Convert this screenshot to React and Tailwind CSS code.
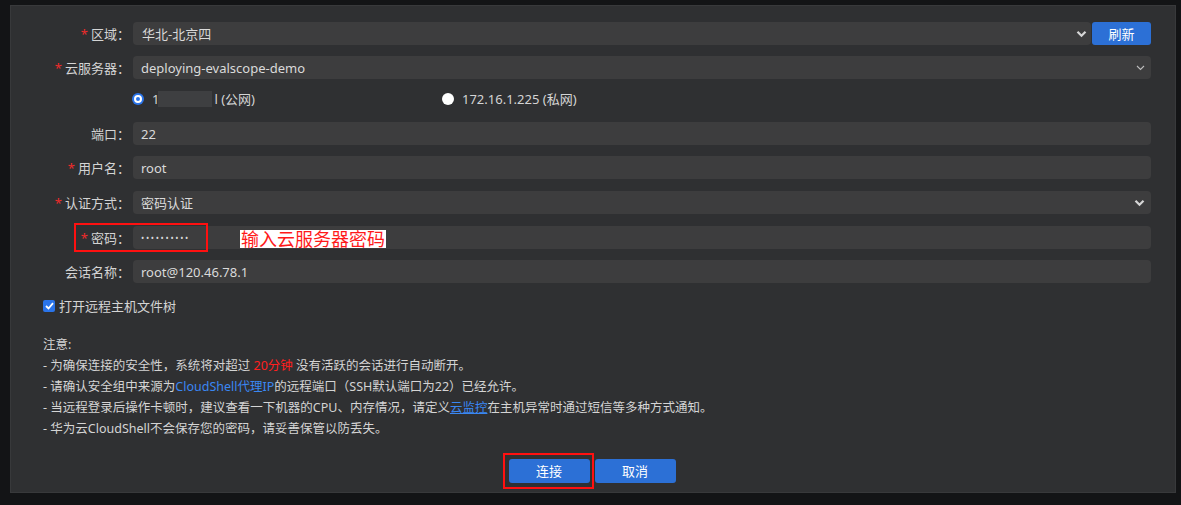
import React from "react";

const Star = () => <span className="text-[#f02b2b] mr-[3px]">*</span>;

const Chevron = ({ bold }) =>
  bold ? (
    <svg width="11" height="8" viewBox="0 0 11 8" className="shrink-0">
      <path d="M1.5 1.8 L5.5 5.8 L9.5 1.8" fill="none" stroke="#d6d6d6" strokeWidth="2.2" />
    </svg>
  ) : (
    <svg width="9" height="6" viewBox="0 0 9 6" className="shrink-0">
      <path d="M1 1 L4.5 4.5 L8 1" fill="none" stroke="#bdbdbd" strokeWidth="1.1" />
    </svg>
  );

const Row = ({ label, required, children, className = "" }) => (
  <div className={`flex items-center h-[23px] ${className}`}>
    <div className="w-[119px] shrink-0 text-right whitespace-nowrap">
      {required && <Star />}
      {label}：
    </div>
    <div className="ml-[3px] flex-1 flex items-center mr-[24px] h-full">{children}</div>
  </div>
);

const Field = ({ value, chevron, bold }) => (
  <div className="flex-1 h-full rounded-[4px] bg-[#3d3d3e] flex items-center pl-[8px] pr-[6px] text-[#dadada]">
    <span className="flex-1">{value}</span>
    {chevron && <Chevron bold={bold} />}
  </div>
);

const App = () => {
  return (
    <div
      className="w-[1181px] h-[505px] bg-[#131416] pt-[5px] pl-[10px] overflow-hidden"
      style={{ fontFamily: '"Noto Sans", "Noto Sans CJK SC", sans-serif' }}
    >
      <div className="w-[1166px] h-[488px] bg-[#2f3032] border border-[#38393b] text-[13px] leading-[18px] text-[#d4d4d4] pt-[16px] relative">
        <Row label="区域" required>
          <div className="flex-1 h-full rounded-[4px] bg-[#3d3d3e] flex items-center pl-[9px] pr-[4px] text-[#dadada] mr-[1px]">
            <span className="flex-1">华北-北京四</span>
            <Chevron bold />
          </div>
          <button className="w-[59px] h-[23px] rounded-[3px] bg-[#2c70d6] text-white text-[13px]">刷新</button>
        </Row>

        <Row label="云服务器" required className="mt-[11px]">
          <Field value="deploying-evalscope-demo" chevron />
        </Row>

        <div className="flex items-center h-[22px] mt-[9px] pl-[121px]">
          <div className="w-[12px] h-[12px] rounded-full bg-[#2a74ea] flex items-center justify-center">
            <div className="w-[8px] h-[8px] rounded-full border-2 border-white bg-[#2a74ea]" />
          </div>
          <span className="ml-[8px] text-[#d4d4d4]">1</span>
          <span className="w-[54px] h-[16px] bg-[#3e3f41] ml-[-1px]" />
          <span className="ml-[2px]">l (公网)</span>
          <div className="ml-[187px] w-[12px] h-[12px] rounded-full bg-white" />
          <span className="ml-[8px]">172.16.1.225 (私网)</span>
        </div>

        <Row label="端口" className="mt-[12px]">
          <Field value="22" />
        </Row>

        <Row label="用户名" required className="mt-[11px]">
          <Field value="root" />
        </Row>

        <Row label="认证方式" required className="mt-[12px]">
          <Field value="密码认证" chevron bold />
        </Row>

        <Row label="密码" required className="mt-[12px]">
          <div className="flex-1 h-full rounded-[4px] bg-[#3d3d3e] flex items-center pl-[8px] text-[#dadada] text-[8.5px] tracking-[1.7px]">
            ••••••••••
          </div>
        </Row>

        <Row label="会话名称" className="mt-[11px]">
          <Field value="root@120.46.78.1" />
        </Row>

        <label className="flex items-center mt-[15px] ml-[32px] h-[16px]">
          <span className="w-[12px] h-[12px] rounded-[2px] bg-[#2a74ea] flex items-center justify-center">
            <svg width="9" height="8" viewBox="0 0 9 8">
              <path d="M1 4 L3.5 6.5 L8 1.2" fill="none" stroke="white" strokeWidth="1.8" />
            </svg>
          </span>
          <span className="ml-[4px]">打开远程主机文件树</span>
        </label>

        <div className="ml-[32px] mt-[20px] leading-[21px] text-[12.5px] text-[#d4d4d4]">
          <div>注意:</div>
          <div>
            - 为确保连接的安全性，系统将对超过 <span className="text-[#ff1f1f]">20分钟</span> 没有活跃的会话进行自动断开。
          </div>
          <div>
            - 请确认安全组中来源为<span className="text-[#3a87f2]">CloudShell代理IP</span>的远程端口（SSH默认端口为22）已经允许。
          </div>
          <div>
            - 当远程登录后操作卡顿时，建议查看一下机器的CPU、内存情况，请定义
            <span className="text-[#3a87f2] underline">云监控</span>在主机异常时通过短信等多种方式通知。
          </div>
          <div>- 华为云CloudShell不会保存您的密码，请妥善保管以防丢失。</div>
        </div>

        <div className="flex justify-center gap-[5px] mt-[20px] ml-[-2px]">
          <button className="relative w-[81px] h-[24px] rounded-[3px] bg-[#2c70d6] text-white">
            连接
            <span className="absolute left-[-6px] top-[-6px] w-[91px] h-[36px] border-2 border-[#ff1010]" />
          </button>
          <button className="w-[81px] h-[24px] rounded-[3px] bg-[#2c70d6] text-white">取消</button>
        </div>

        <div className="absolute left-[63px] top-[217px] w-[134px] h-[29px] border-2 border-[#ff1010]" />
        <div className="absolute left-[229px] top-[224px] h-[18px] px-[1px] bg-white text-[#ff1a1a] text-[18px] leading-[18px] whitespace-nowrap">
          输入云服务器密码
        </div>
      </div>
    </div>
  );
};

export default App;
